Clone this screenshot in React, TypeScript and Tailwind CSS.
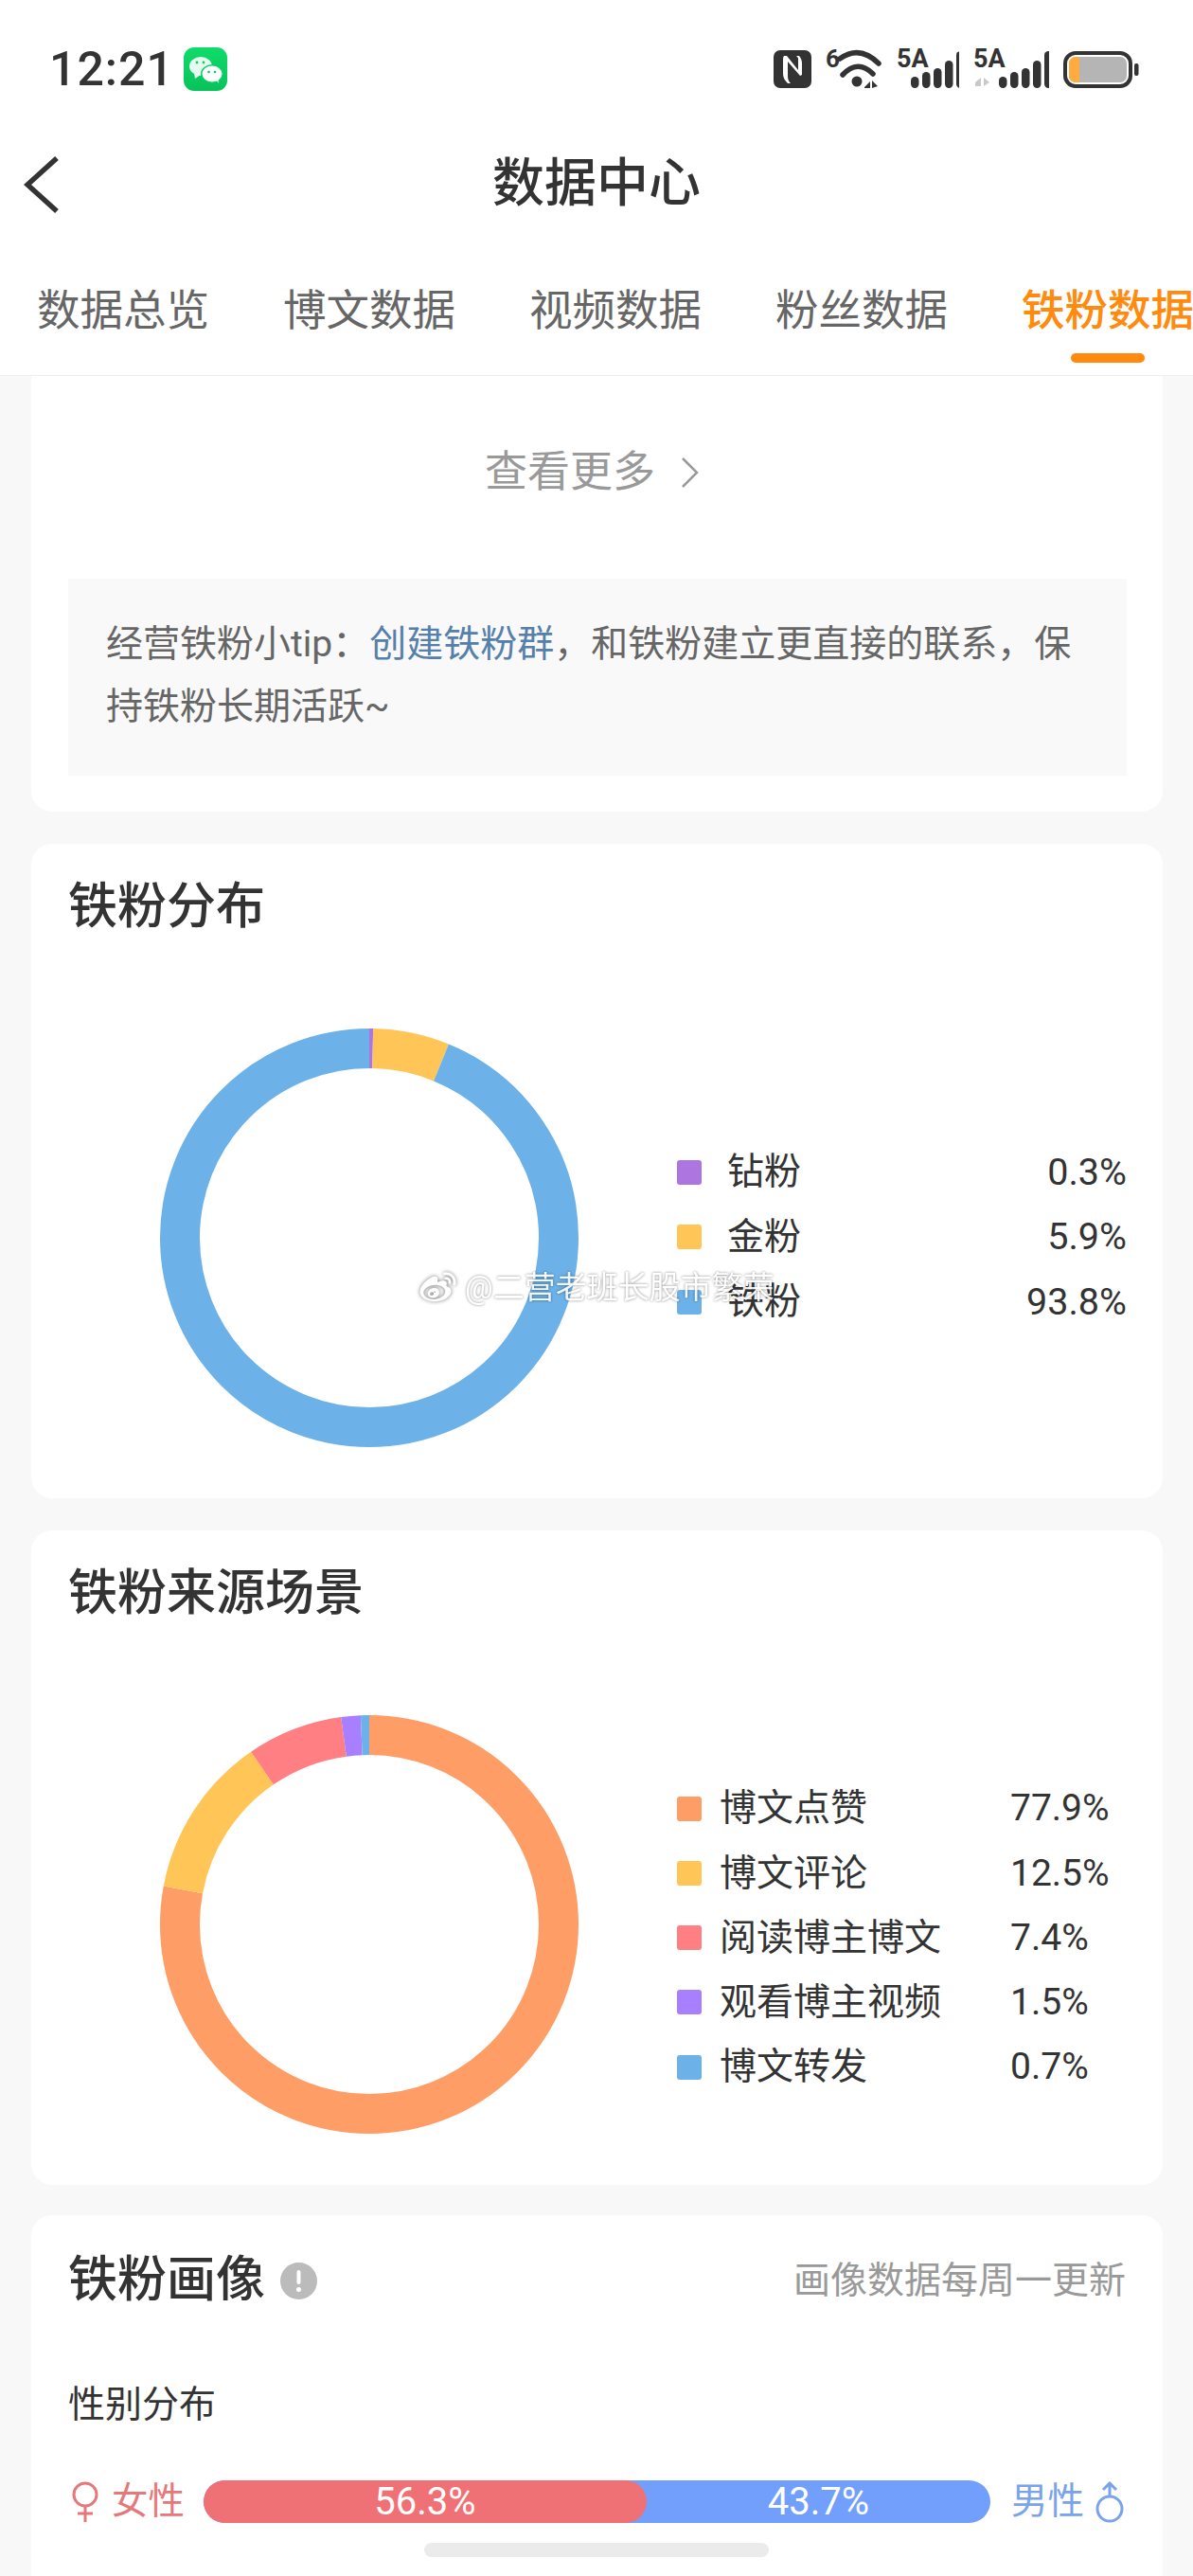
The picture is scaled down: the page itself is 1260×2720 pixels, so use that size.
import type { FC } from "react";
import { FaWeibo } from "react-icons/fa";

interface Slice {
  label: string;
  value: number;
  color: string;
  swatch: string;
}

const tabs = ["数据总览", "博文数据", "视频数据", "粉丝数据", "铁粉数据"];

const levels: Slice[] = [
  { label: "钻粉", value: 0.3, color: "#ac75e0", swatch: "bg-[#ac75e0]" },
  { label: "金粉", value: 5.9, color: "#ffc657", swatch: "bg-[#ffc657]" },
  { label: "铁粉", value: 93.8, color: "#6cb2e8", swatch: "bg-[#6cb2e8]" },
];

const sources: Slice[] = [
  { label: "博文点赞", value: 77.9, color: "#ff9d66", swatch: "bg-[#ff9d66]" },
  { label: "博文评论", value: 12.5, color: "#ffc657", swatch: "bg-[#ffc657]" },
  { label: "阅读博主博文", value: 7.4, color: "#ff7f82", swatch: "bg-[#ff7f82]" },
  { label: "观看博主视频", value: 1.5, color: "#a880ff", swatch: "bg-[#a880ff]" },
  { label: "博文转发", value: 0.7, color: "#6cb2e8", swatch: "bg-[#6cb2e8]" },
];

const WeChatBadge = () => (
  <svg width="46" height="46" viewBox="0 0 46 46" className="ml-[10px]">
    <defs>
      <linearGradient id="wechat-bg" x1="0" y1="0" x2="0" y2="1">
        <stop offset="0" stopColor="#0fdc6a" />
        <stop offset="1" stopColor="#08c25a" />
      </linearGradient>
    </defs>
    <rect width="46" height="46" rx="11" fill="url(#wechat-bg)" />
    <ellipse cx="18" cy="20" rx="12" ry="10" fill="#e6fbef" />
    <path d="M11 27l1 6 6-4z" fill="#e6fbef" />
    <ellipse cx="30" cy="28" rx="12" ry="10" fill="#0bcf62" />
    <ellipse cx="30" cy="28" rx="10.5" ry="8.5" fill="#fff" />
    <path d="M34 34l3 4-1-6z" fill="#fff" />
    <circle cx="14" cy="16" r="1.4" fill="#0bcf62" />
    <circle cx="21" cy="16" r="1.4" fill="#0bcf62" />
    <circle cx="26.5" cy="26" r="1.3" fill="#0bcf62" />
    <circle cx="33" cy="26" r="1.3" fill="#0bcf62" />
  </svg>
);

const NfcIcon = () => (
  <svg width="40" height="40" viewBox="0 0 40 40">
    <rect width="40" height="40" rx="7" fill="#333" />
    <path
      d="M11 6h3l12 15V9c0-1-1-2-2-3h3c2 2 3 5 3 8v12l-2 1-13-15v15c0 4 1 6 3 8h-3c-3-3-5-6-5-10V11c0-2 0-4 1-5z"
      fill="#fff"
    />
  </svg>
);

const WifiIcon = () => (
  <svg width="60" height="60" viewBox="0 -8 60 60">
    <text x="0" y="20" fontSize="26" fontWeight="700" fill="#333" fontFamily="Roboto">
      6
    </text>
    <path d="M15 11Q36-4 56 16" fill="none" stroke="#333" strokeWidth="5.5" strokeLinecap="round" />
    <path d="M18 28Q34 11 50 27" fill="none" stroke="#333" strokeWidth="5.5" strokeLinecap="round" />
    <circle cx="33" cy="35" r="5.5" fill="#333" />
    <path d="M41 41l6-6v7h-6zM49 34l6 6-6 2z" fill="#333" />
  </svg>
);

const SignalIcon: FC<{ shift: number; width: number; arrows?: boolean }> = ({ shift, width, arrows }) => (
  <svg width={width} height="58" viewBox={`0 -8 ${width} 58`}>
    <text x="0" y="19" fontSize="27" fontWeight="700" fill="#333" fontFamily="Roboto">
      5A
    </text>
    {arrows && <path d="M2 35l6-5v9H2zM11 30l6 5-6 4z" fill="#c9c9c9" />}
    {[
      [0, 29],
      [12, 24],
      [24, 20],
      [36, 12],
      [48, 2],
    ].map(([x, top]) => (
      <rect key={x} x={x + shift} y={top} width="8.5" height={41 - top} rx="4.2" fill="#333" />
    ))}
  </svg>
);

const BatteryIcon = () => (
  <svg width="80" height="40" viewBox="0 0 80 40">
    <rect x="2" y="3" width="69" height="35" rx="11" fill="#fff" stroke="#333" strokeWidth="4" />
    <rect x="6" y="7" width="61" height="27" rx="7" fill="#b5b5b5" />
    <path d="M13 7h4v27h-4a7 7 0 0 1-7-7V14a7 7 0 0 1 7-7z" fill="#ffab40" />
    <rect x="75" y="14" width="4.5" height="13" rx="2" fill="#333" />
  </svg>
);

const Donut: FC<{ slices: Slice[] }> = ({ slices }) => {
  const r = 200;
  const c = 2 * Math.PI * r;
  let used = 0;
  return (
    <svg width="442" height="442" viewBox="0 0 442 442" className="shrink-0 -rotate-90">
      {slices.map((s) => {
        const len = (s.value / 100) * c;
        const offset = -(used / 100) * c;
        used += s.value;
        return (
          <circle
            key={s.label}
            cx="221"
            cy="221"
            r={r}
            fill="none"
            stroke={s.color}
            strokeWidth="42"
            strokeDasharray={`${len} ${c - len}`}
            strokeDashoffset={offset}
          />
        );
      })}
    </svg>
  );
};

const Female = () => (
  <svg width="30" height="43" viewBox="0 0 30 43" fill="none" stroke="#e5787a" strokeWidth="3">
    <circle cx="15" cy="14" r="12" />
    <path d="M15 26v17M7 34h16" />
  </svg>
);

const Male = () => (
  <svg width="30" height="44" viewBox="0 0 30 44" fill="none" stroke="#7aa3ea" strokeWidth="3">
    <circle cx="15" cy="29" r="13" />
    <path d="M15 16V2M8 9l7-7 7 7" />
  </svg>
);

const CardTitle: FC<{ title: string }> = ({ title }) => (
  <h2 className="pl-[39px] pt-[37px] text-[52px] leading-[60px] font-medium text-[#333]">{title}</h2>
);

const App = () => {
  return (
    <div className="relative h-[2720px] w-[1260px] overflow-hidden bg-[#f8f8f8] font-['Roboto','Noto_Sans_CJK_SC',sans-serif] text-[#333]">
      <header className="h-[397px] border-b border-[#eeeeee] bg-white">
        <div className="flex h-[146px] items-center justify-between pl-[52px] pr-[57px]">
          <div className="flex items-center">
            <span className="text-[50px] leading-none font-medium tracking-[1px]">12:21</span>
            <WeChatBadge />
          </div>
          <div className="flex items-center gap-[15px]">
            <NfcIcon />
            <WifiIcon />
            <SignalIcon shift={15} width={66} />
            <SignalIcon shift={27} width={80} arrows />
            <BatteryIcon />
          </div>
        </div>

        <div className="grid h-[92px] grid-cols-[1fr_auto_1fr] items-center">
          <svg width="40" height="62" viewBox="0 0 40 62" className="ml-[25px] mt-[6px]" fill="none" stroke="#333" strokeWidth="5.5">
            <path d="M35 3L4 31l31 28" />
          </svg>
          <h1 className="pt-[3px] text-[55px] leading-none font-medium">数据中心</h1>
        </div>

        <nav className="flex gap-[78px] overflow-hidden pl-[39px] pt-[61px]">
          {tabs.map((tab, i) => (
            <div key={tab} className="flex shrink-0 flex-col items-center">
              <span
                className={
                  i === 4
                    ? "text-[45.5px] leading-[60px] font-medium text-[#ff8a0d]"
                    : "text-[45.5px] leading-[60px] text-[#666]"
                }
              >
                {tab}
              </span>
              {i === 4 && <span className="mt-[14px] h-[10px] w-[78px] rounded-full bg-[#ff8a0d]" />}
            </div>
          ))}
        </nav>
      </header>

      <main className="flex flex-col gap-[34px] pl-[33px] pr-[32px]">
        <section className="rounded-b-[22px] bg-white pb-[38px] pt-[72px]">
          <div className="flex items-center justify-center gap-[26px] pr-[10px] text-[45px] leading-[60px] text-[#999]">
            查看更多
            <svg width="21" height="34" viewBox="0 0 21 34" fill="none" stroke="#999" strokeWidth="2.5">
              <path d="M3 2l15 15L3 32" />
            </svg>
          </div>
          <p className="ml-[39px] mr-[38px] mt-[82px] bg-[#f9f9f9] pb-[40px] pl-[40px] pr-[30px] pt-[36px] text-[39px] leading-[66px] text-[#666]">
            经营铁粉小tip：<span className="text-[#5580ab]">创建铁粉群</span>，和铁粉建立更直接的联系，保持铁粉长期活跃~
          </p>
        </section>

        <section className="h-[691px] rounded-[22px] bg-white">
          <CardTitle title="铁粉分布" />
          <div className="mt-[98px] flex items-center pl-[136px] pr-[38px]">
            <Donut slices={levels} />
            <ul className="-mt-[2px] ml-[104px] flex-1 text-[39px]">
              {levels.map((s) => (
                <li key={s.label} className="flex h-[68.5px] items-center">
                  <span className={`h-[26px] w-[26px] rounded-[3px] ${s.swatch}`} />
                  <span className="ml-[27px]">{s.label}</span>
                  <span className="ml-auto text-[39.5px]">{s.value}%</span>
                </li>
              ))}
            </ul>
          </div>
        </section>

        <section className="h-[691px] rounded-[22px] bg-white">
          <CardTitle title="铁粉来源场景" />
          <div className="mt-[98px] flex items-center pl-[136px]">
            <Donut slices={sources} />
            <ul className="ml-[104px] mt-[28px] flex-1 text-[39px]">
              {sources.map((s) => (
                <li key={s.label} className="flex h-[68.25px] items-center">
                  <span className={`h-[26px] w-[26px] rounded-[3px] ${s.swatch}`} />
                  <span className="ml-[19px] w-[307px]">{s.label}</span>
                  <span>{s.value}%</span>
                </li>
              ))}
            </ul>
          </div>
        </section>

        <section className="-mt-[2px] h-[420px] rounded-[22px] bg-white">
          <div className="flex items-center justify-between pl-[39px] pr-[39px] pt-[39px]">
            <div className="flex items-center">
              <h2 className="text-[52px] leading-[60px] font-medium">铁粉画像</h2>
              <svg width="39" height="39" viewBox="0 0 39 39" className="ml-[16px]">
                <circle cx="19.5" cy="19.5" r="19.5" fill="#bbbbbb" />
                <rect x="17.5" y="8" width="4" height="15" rx="2" fill="#fff" />
                <circle cx="19.5" cy="28.5" r="2.5" fill="#fff" />
              </svg>
            </div>
            <span className="text-[39px] leading-[60px] text-[#999]">画像数据每周一更新</span>
          </div>

          <p className="ml-[39px] mt-[76px] text-[39px] leading-[50px]">性别分布</p>

          <div className="ml-[42px] mt-[55px] flex items-center">
            <Female />
            <span className="ml-[13px] text-[38.5px] leading-none text-[#e5787a]">女性</span>
            <div className="ml-[20px] flex h-[45px] w-[831px] rounded-full bg-[#719ffb] text-[40px] leading-[45px] text-white">
              <span className="w-[468px] rounded-full bg-[#ef7175] text-center">56.3%</span>
              <span className="flex-1 text-center">43.7%</span>
            </div>
            <span className="ml-[22px] text-[38.5px] leading-none text-[#7aa3ea]">男性</span>
            <span className="ml-[12px]">
              <Male />
            </span>
          </div>
        </section>
      </main>

      {/* 图片水印 */}
      <div className="absolute left-[441px] top-[1338px] flex items-center gap-[7px] text-[33px] leading-[44px] text-white opacity-90 [text-shadow:0_0_3px_rgba(0,0,0,0.55)]">
        <FaWeibo className="h-[38px] w-[43px] drop-shadow-[0_0_2px_rgba(0,0,0,0.6)]" />
        <span>@二营老班长股市繁荣</span>
      </div>

      <div className="absolute left-[448px] top-[2685px] h-[15px] w-[364px] rounded-full bg-[#ebebeb]" />
    </div>
  );
};

export default App;
